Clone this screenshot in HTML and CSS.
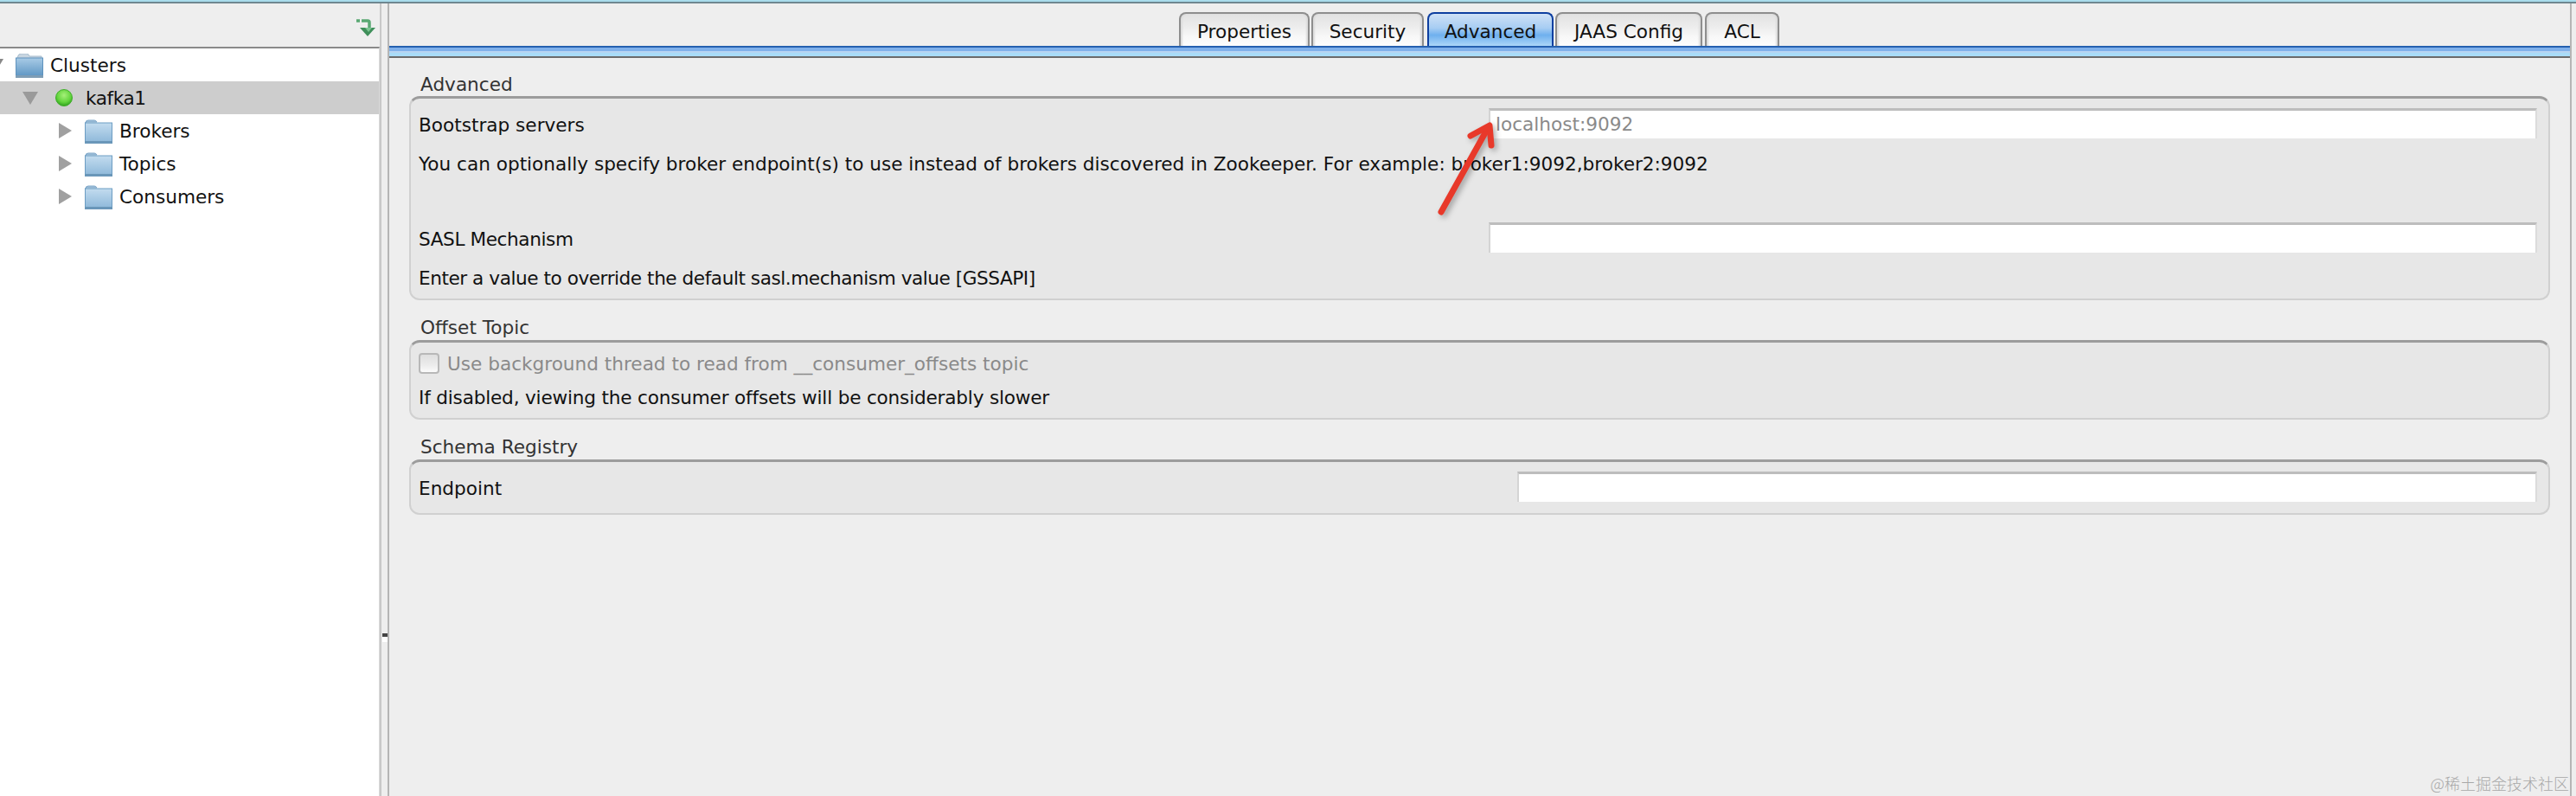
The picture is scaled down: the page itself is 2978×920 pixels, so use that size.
FILE: index.html
```html
<!DOCTYPE html>
<html lang="en">
<head>
<meta charset="utf-8">
<title>Kafka Tool</title>
<link rel="stylesheet" href="styles.css">
</head>
<body>
<svg class="defs" width="0" height="0" aria-hidden="true">
  <defs>
    <linearGradient id="fold" x1="0" y1="0" x2="0" y2="1">
      <stop offset="0" stop-color="#c3dcef"/>
      <stop offset="1" stop-color="#8fb9da"/>
    </linearGradient>
    <linearGradient id="foldDark" x1="0" y1="0" x2="0" y2="1">
      <stop offset="0" stop-color="#a9cbe6"/>
      <stop offset="1" stop-color="#5f97c4"/>
    </linearGradient>
    <radialGradient id="led" cx="0.5" cy="0.35" r="0.65">
      <stop offset="0" stop-color="#a6f07a"/>
      <stop offset="0.65" stop-color="#62d43c"/>
      <stop offset="1" stop-color="#2f9e1f"/>
    </radialGradient>
    <symbol id="folder" viewBox="0 0 32 28">
      <path d="M1 4 Q1 1 4 1 H11 Q13 1 14 3 H1 Z" fill="#a9c6de" stroke="#7da6c8"/>
      <rect x="0.5" y="4" width="31" height="22" fill="url(#fold)" stroke="#6d9dc3"/>
      <rect x="0" y="25" width="32" height="3" fill="#6a97b9"/>
    </symbol>
    <symbol id="folderDark" viewBox="0 0 32 28">
      <path d="M2 5 Q3 0 6 0 H13 Q15 0 16 3 H30 V6 H2 Z" fill="#c8d5e0" stroke="#a6bccd"/>
      <rect x="0.5" y="5" width="31" height="21" fill="url(#foldDark)" stroke="#5e92bd"/>
      <rect x="0" y="25" width="32" height="3" fill="#7f9db5"/>
    </symbol>
  </defs>
</svg>

<div class="topline"></div>
<div class="main">
  <aside class="left">
    <div class="toolbar">
      <svg class="refresh" viewBox="0 0 22 20" aria-hidden="true">
        <path d="M0 2 H4 M6 2 H13 Q15 2 15 4 V11" fill="none" stroke="#5aa873" stroke-width="3.5"/>
        <path d="M4 10 H22 L13 20 Z" fill="#3f8f5a"/>
        <path d="M10 10 H18 L14 15 Z" fill="#7cc492"/>
      </svg>
    </div>
    <div class="tree">
      <div class="node">
        <span class="tri-down tri-clip"></span>
        <svg class="ico ico-root"><use href="#folderDark"/></svg>
        <span>Clusters</span>
      </div>
      <div class="node selected">
        <span class="tri-down"></span>
        <svg class="dot" viewBox="0 0 20 20"><circle cx="10" cy="10" r="9.5" fill="url(#led)" stroke="#3fae2a"/></svg>
        <span class="kafka">kafka1</span>
      </div>
      <div class="node child">
        <span class="tri-right"></span>
        <svg class="ico"><use href="#folder"/></svg>
        <span>Brokers</span>
      </div>
      <div class="node child">
        <span class="tri-right"></span>
        <svg class="ico"><use href="#folder"/></svg>
        <span>Topics</span>
      </div>
      <div class="node child">
        <span class="tri-right"></span>
        <svg class="ico"><use href="#folder"/></svg>
        <span>Consumers</span>
      </div>
    </div>
  </aside>

  <div class="splitter"><span class="grip"></span></div>

  <section class="right">
    <nav class="tabs">
      <div class="tab t1">Properties</div>
      <div class="tab t2">Security</div>
      <div class="tab active t3">Advanced</div>
      <div class="tab t4">JAAS Config</div>
      <div class="tab t5">ACL</div>
    </nav>
    <div class="strip"></div>
    <div class="content">
      <div class="legend l1">Advanced</div>
      <div class="group g1">
        <div class="field"><span>Bootstrap servers</span><div class="input">localhost:9092</div></div>
        <div class="help h1">You can optionally specify broker endpoint(s) to use instead of brokers discovered in Zookeeper. For example: broker1:9092,broker2:9092</div>
        <div class="field f2"><span class="sasl">SASL Mechanism</span><div class="input"></div></div>
        <div class="help h1 tight-a">Enter a value to override the default sasl.mechanism value [GSSAPI]</div>
      </div>
      <div class="legend">Offset Topic</div>
      <div class="group g2">
        <div class="check"><span class="box"></span><span>Use background thread to read from __consumer_offsets topic</span></div>
        <div class="help h2 tight-b">If disabled, viewing the consumer offsets will be considerably slower</div>
      </div>
      <div class="legend">Schema Registry</div>
      <div class="group g3">
        <div class="field wide"><span>Endpoint</span><div class="input"></div></div>
      </div>
    </div>
  </section>
</div>

<svg class="annot" viewBox="0 0 80 120" aria-hidden="true">
  <path d="M6 107 L60 10" fill="none" stroke="#e8392a" stroke-width="7" stroke-linecap="round"/>
  <path d="M40 19 L62 7 L64 30" fill="none" stroke="#e8392a" stroke-width="7" stroke-linejoin="round" stroke-linecap="round"/>
</svg>
<div class="watermark">@稀土掘金技术社区</div>
</body>
</html>
```
FILE: styles.css
```css
* { box-sizing: border-box; }
html, body { margin: 0; height: 100%; }
body {
  width: 2978px;
  height: 920px;
  overflow: hidden;
  background: #eeeeee;
  font-family: "DejaVu Sans", "Noto Sans CJK SC", sans-serif;
  font-size: 21.6px;
  color: #111;
  display: flex;
  flex-direction: column;
  position: relative;
}
.defs { position: absolute; }
.topline {
  height: 4px;
  flex: none;
  background: #a9dcec;
  border-bottom: 2px solid #6f8790;
}
.main { flex: 1; display: flex; min-height: 0; padding-right: 5px; }

/* left tree */
.left { width: 439px; flex: none; display: flex; flex-direction: column; }
.toolbar {
  height: 50px;
  flex: none;
  display: flex;
  justify-content: flex-end;
  padding: 18px 5px 0 0;
}
.refresh { width: 22px; height: 20px; }
.tree {
  flex: 1;
  background: #fff;
  border-top: 2px solid #8a8a8a;
  border-right: 1px solid #d8d8d8;
}
.node { height: 38px; display: flex; align-items: center; position: relative; white-space: nowrap; }
.node.selected { background: #cdcdcd; padding-left: 26px; }
.node.child { padding-left: 68px; }
.kafka { letter-spacing: -0.4px; }
.tri-down {
  width: 0; height: 0;
  border-left: 9px solid transparent;
  border-right: 9px solid transparent;
  border-top: 15px solid #9a9a9a;
  flex: none;
}
.tri-clip { margin-left: -14px; margin-right: 14px; border-top-color: #888; }
.tri-right {
  width: 0; height: 0;
  border-top: 9px solid transparent;
  border-bottom: 9px solid transparent;
  border-left: 15px solid #a0a0a0;
  flex: none;
  margin-right: 15px;
}
.ico { width: 32px; height: 28px; flex: none; margin-right: 8px; margin-top: 1px; }
.ico-root { margin-right: 8px; }
.dot { width: 20px; height: 20px; flex: none; margin-left: 20px; margin-right: 15px; }

/* splitter */
.splitter {
  width: 11px;
  flex: none;
  display: flex;
  justify-content: center;
  background: #eeeeee;
  border-left: 2px solid #c8c8c8;
  border-right: 2px solid #b5b5b5;
}
.grip { width: 6px; height: 10px; background: #444; border-bottom: 6px solid #fff; margin-top: 728px; }

/* right */
.right { flex: 1; min-width: 0; display: flex; flex-direction: column; border-right: 2px solid #b5b5b5; }
.tabs { height: 49px; flex: none; padding: 10px 0 0 913px; display: flex; align-items: stretch; }
.tab {
  height: 43px;
  padding-bottom: 1px;
  display: flex;
  align-items: center;
  justify-content: center;
  border: 2px solid #8e8e8e;
  border-bottom: 0;
  border-radius: 8px 8px 0 0;
  background: linear-gradient(#e2e2e2, #ececec 35%, #f8f8f8 65%, #fff);
  box-shadow: inset 2px 0 2px #dcdcdc, inset -2px 0 2px #dcdcdc;
  margin-right: 2px;
  flex: none;
}
.t1 { width: 151px; }
.t2 { width: 130px; margin-right: 4px; }
.t3 { width: 146px; }
.t4 { width: 170px; margin-right: 3px; }
.t5 { width: 86px; }
.tab.active {
  border-color: #0e3fa0;
  background: linear-gradient(#cfe1f6, #a7cdf3 40%, #6fb0ee 60%, #bfe2fb);
  box-shadow: none;
}
.strip {
  height: 14px;
  flex: none;
  background: linear-gradient(#2560b0 0 2px, #7fb0ea 2px 6px, #b7d4f2 6px 8px, #a9dcf8 8px 12px, #6b6b6b 12px);
}
.content { flex: 1; padding: 17px 23px 0 23px; }
.legend {
  height: 28px;
  line-height: 28px;
  padding-left: 13px;
  color: #333;
  margin-top: 18px;
}
.l1 { margin-top: 0; height: 27px; }
.group {
  border: 2px solid #d0d0d0;
  border-top: 3px solid #9c9c9c;
  border-radius: 12px;
  background: #e7e7e7;
  padding: 11px 13px 0 9px;
}
.g1 { height: 236px; }
.g2 { height: 92px; padding-top: 9px; }
.g3 { height: 64px; }
.field {
  display: grid;
  grid-template-columns: 1237px 1fr;
  align-items: center;
  height: 35px;
}
.field > span { padding-top: 3px; }
.field.wide { grid-template-columns: 1270px 1fr; }
.f2 { margin-top: 52px; }
.sasl { letter-spacing: -0.4px; }
.input {
  height: 35px;
  background: #fff;
  border-top: 3px solid #bdbdbd;
  border-left: 2px solid #d4d4d4;
  border-right: 2px solid #dcdcdc;
  color: #8a8a8a;
  line-height: 32px;
  padding-left: 6px;
}
.help { height: 30px; line-height: 30px; white-space: nowrap; color: #111; }
.h1 { margin-top: 15px; }
.h2 { margin-top: 10px; }
.tight-a { letter-spacing: -0.45px; }
.tight-b { letter-spacing: -0.19px; }
.check { height: 30px; display: flex; align-items: center; color: #8a8a8a; white-space: nowrap; }
.box {
  width: 24px;
  height: 24px;
  flex: none;
  margin-right: 9px;
  border: 2px solid #b8b8b8;
  border-radius: 4px;
  background: linear-gradient(#dfdfdf, #ececec 60%, #fbfbfb);
}

/* overlays */
.annot { position: absolute; left: 1660px; top: 138px; width: 80px; height: 120px; filter: drop-shadow(3px 3px 3px rgba(0,0,0,.3)); }
.watermark {
  position: absolute;
  right: 8px;
  bottom: 5px;
  font-size: 18px;
  line-height: 20px;
  color: #a8a8a8;
  font-family: "Noto Sans CJK SC", sans-serif;
  font-weight: 300;
}
```
